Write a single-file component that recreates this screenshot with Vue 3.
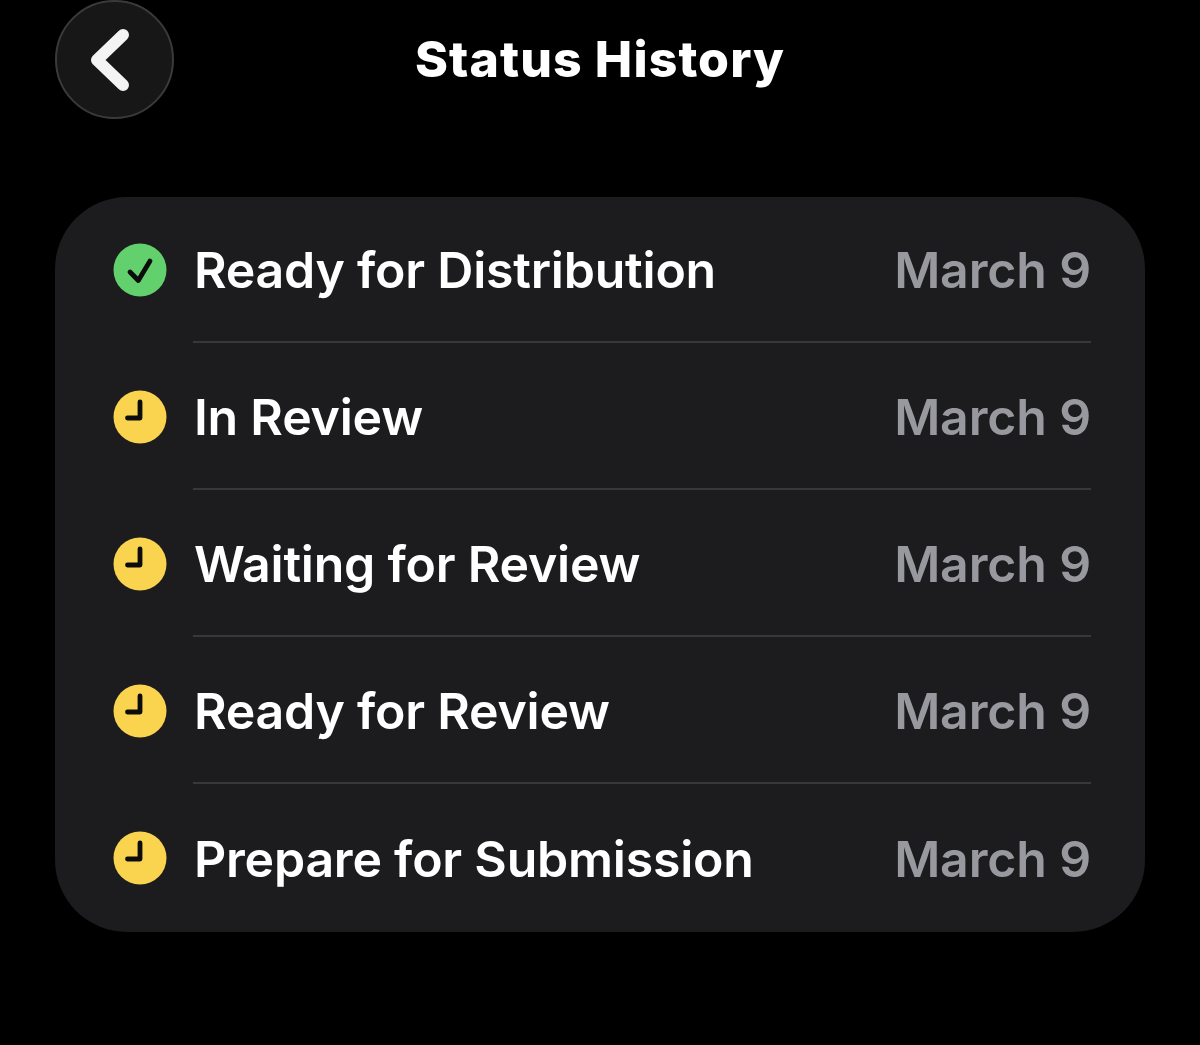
<script setup>
const rows = [
  { label: "Ready for Distribution", date: "March 9", done: true },
  { label: "In Review", date: "March 9", done: false },
  { label: "Waiting for Review", date: "March 9", done: false },
  { label: "Ready for Review", date: "March 9", done: false },
  { label: "Prepare for Submission", date: "March 9", done: false },
];
</script>

<template>
  <div class="screen">
    <header class="top">
      <button class="back">
        <svg width="44" height="64" viewBox="0 0 44 64">
          <path d="M36 7 L10 32 L36 57" fill="none" stroke="#f4f4f4" stroke-width="12" stroke-linecap="round" stroke-linejoin="round" />
        </svg>
      </button>
      <h1 class="title">Status History</h1>
    </header>

    <section class="card">
      <div v-for="row in rows" :key="row.label" class="row">
        <svg v-if="row.done" class="icon" width="54" height="54" viewBox="0 0 54 54">
          <circle cx="27" cy="27" r="26.5" fill="#62d06c" />
          <path d="M17 29 L25.3 37.5 L37 18" fill="none" stroke="#0c0c0c" stroke-width="4.8" stroke-linecap="round" stroke-linejoin="round" />
        </svg>
        <svg v-else class="icon" width="54" height="54" viewBox="0 0 54 54">
          <circle cx="27" cy="27" r="26.5" fill="#fad44f" />
          <path d="M27 12 V28 H14.5" fill="none" stroke="#0c0c0c" stroke-width="4.8" stroke-linecap="round" stroke-linejoin="round" />
        </svg>
        <div class="body">
          <span class="label">{{ row.label }}</span>
          <span class="date">{{ row.date }}</span>
        </div>
      </div>
    </section>
  </div>
</template>

<style>
html, body {
  margin: 0;
  background: #000;
}
</style>

<style scoped>
.screen {
  width: 1200px;
  height: 1045px;
  overflow: hidden;
  background: #000;
  box-sizing: border-box;
  padding: 0 55px;
  font-family: Inter, "Liberation Sans", sans-serif;
}
.top {
  position: relative;
  height: 197px;
}
.back {
  position: absolute;
  left: 0;
  top: 0;
  width: 119px;
  height: 119px;
  box-sizing: border-box;
  border-radius: 50%;
  border: 2px solid #3a3a3a;
  background: #171717;
  padding: 0 11px 0 0;
  display: flex;
  align-items: center;
  justify-content: center;
}
.title {
  margin: 0;
  padding-top: 29px;
  text-align: center;
  color: #fff;
  font-size: 50px;
  line-height: 60px;
  font-weight: 800;
  letter-spacing: 1.1px;
}
.card {
  background: #1c1c1e;
  border-radius: 72px;
  height: 735px;
  padding: 0 54px 0 58px;
  box-sizing: border-box;
  display: flex;
  flex-direction: column;
}
.row {
  display: flex;
  align-items: center;
  gap: 26px;
  height: 147px;
  box-sizing: border-box;
  padding-bottom: 1px;
}
.icon {
  flex: none;
}
.body {
  flex: 1;
  height: 100%;
  display: flex;
  align-items: center;
  justify-content: space-between;
  border-bottom: 2px solid #38383a;
  box-sizing: border-box;
  padding-top: 2px;
}
.row:last-child .body {
  border-bottom: none;
}
.label {
  color: #fff;
  font-size: 50px;
  font-weight: 560;
  letter-spacing: -0.22px;
  padding-left: 1px;
}
.date {
  color: #98989f;
  font-size: 50px;
  font-weight: 560;
  letter-spacing: -0.15px;
}
</style>
